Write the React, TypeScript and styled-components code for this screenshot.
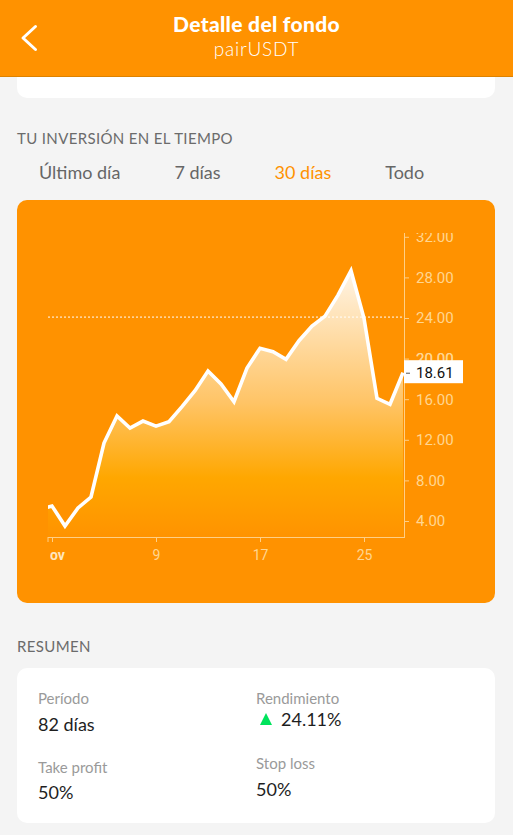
import React from "react";
import styled, { createGlobalStyle } from "styled-components";

const GlobalStyle = createGlobalStyle`
  html, body { margin: 0; padding: 0; background: #f4f4f4; }
  body { font-family: "Lato", "Noto Sans", sans-serif; -webkit-font-smoothing: antialiased; }
  * { box-sizing: border-box; }
`;

const ORANGE = "#ff9200";

const Page = styled.div`
  width: 513px;
  min-height: 835px;
  background: #f4f4f4;
  display: flex;
  flex-direction: column;
`;

const Header = styled.header`
  height: 77px;
  background: ${ORANGE};
  border-bottom: 1px solid #dd8200;
  display: grid;
  grid-template-columns: 60px 1fr 60px;
  align-items: center;
`;

const BackButton = styled.button`
  border: 0;
  background: transparent;
  padding: 0 0 0 20px;
  height: 40px;
  display: flex;
  align-items: center;
  cursor: pointer;
`;

const TitleBlock = styled.div`
  display: flex;
  flex-direction: column;
  align-items: center;
  color: #fff;
  padding-bottom: 4px;
`;

const Title = styled.h1`
  margin: 0;
  font-family: "Lato", sans-serif;
  font-weight: 900;
  font-size: 21px;
  line-height: 26px;
  letter-spacing: 0.3px;
`;

const Subtitle = styled.div`
  font-family: "Lato", sans-serif;
  font-weight: 300;
  font-size: 19px;
  line-height: 24px;
  letter-spacing: 0.8px;
`;

const Content = styled.main`
  display: flex;
  flex-direction: column;
  padding: 0 18px 12px 17px;
`;

const TopCard = styled.div`
  height: 21px;
  background: #fff;
  border-radius: 0 0 10px 10px;
`;

const SectionTitle = styled.h2<{ $top: number }>`
  margin: ${(p) => p.$top}px 0 0;
  font-family: "Lato", sans-serif;
  font-weight: 400;
  font-size: 15px;
  line-height: 18px;
  color: #6b6b6b;
  text-transform: uppercase;
  letter-spacing: 0.35px;
`;

const Tabs = styled.nav`
  display: flex;
  gap: 54px;
  padding-left: 22px;
  margin-top: 14px;
  height: 22px;
`;

const Tab = styled.button<{ $active?: boolean }>`
  border: 0;
  background: transparent;
  padding: 0;
  font-family: "Lato", sans-serif;
  font-size: 18px;
  line-height: 22px;
  color: ${(p) => (p.$active ? ORANGE : "#666666")};
  cursor: pointer;
`;

const ChartCard = styled.section`
  margin-top: 17px;
  height: 403px;
  background: ${ORANGE};
  border-radius: 10px;
  overflow: hidden;
`;

const ChartSvg = styled.svg`
  display: block;
  width: 478px;
  height: 403px;
`;

const SummaryCard = styled.section`
  margin-top: 13px;
  height: 155px;
  background: #fff;
  border-radius: 10px;
  padding: 20px 21px 0;
  display: grid;
  grid-template-columns: 218px 1fr;
`;

const Column = styled.div<{ $gap: number }>`
  display: flex;
  flex-direction: column;
  gap: ${(p) => p.$gap}px;
`;

const Item = styled.div`
  display: flex;
  flex-direction: column;
`;

const Label = styled.div`
  font-size: 15px;
  line-height: 20px;
  color: #9a9a9a;
`;

const Value = styled.div<{ $offset: number }>`
  margin-top: ${(p) => p.$offset}px;
  font-size: 18px;
  line-height: 24px;
  color: #1e1e1e;
  display: flex;
  align-items: center;
  gap: 9px;
`;

const UpTriangle = styled.span`
  width: 0;
  height: 0;
  border-left: 6.5px solid transparent;
  border-right: 6.5px solid transparent;
  border-bottom: 12px solid #00e35c;
  margin-left: 4px;
  margin-top: -1px;
`;

// ---- chart data ----
const values = [
  5.08, 5.48, 3.51, 5.28, 6.36, 11.68, 14.34, 13.15, 13.84, 13.35, 13.78, 15.26,
  16.84, 18.78, 17.5, 15.75, 19.07, 21.01, 20.68, 19.93, 21.76, 23.21, 24.19,
  26.26, 28.66, 23.97, 16.09, 15.5, 18.61,
];

const PLOT = { left: 31, right: 387, top: 33, bottom: 337 };
const xOf = (i: number) => 22 + i * 13; // i=1 -> day 1 at 35
const yOf = (v: number) => 361.6 - 10.15 * v;
const AXIS = "#ffcf85";
const LABEL = "#ffd690";
const CHART_FONT = "Roboto, 'Noto Sans', sans-serif";

function Chart() {
  const pts = values.map((v, i) => [xOf(i), yOf(v)] as const);
  const line = pts.map(([x, y], i) => `${i ? "L" : "M"}${x.toFixed(1)} ${y.toFixed(1)}`).join(" ");
  const last = pts[pts.length - 1];
  const area = `${line} L${last[0]} ${PLOT.bottom} L${pts[0][0]} ${PLOT.bottom} Z`;
  const yTicks = [4, 8, 12, 16, 20, 24, 28, 32];
  const xTicks = [
    { day: 1, label: "Nov", bold: true },
    { day: 9, label: "9" },
    { day: 17, label: "17" },
    { day: 25, label: "25" },
  ];
  const current = values[values.length - 1];
  const cy = yOf(current);
  const refY = yOf(24.09);
  const peekTop = yOf(20) - 12;
  const peekH = Math.max(0, cy - 12.5 - peekTop);

  return (
    <ChartSvg viewBox="0 0 478 403">
      <defs>
        <linearGradient id="areaFill" gradientUnits="userSpaceOnUse" x1="0" y1="68" x2="0" y2="337">
          <stop offset="0" stopColor="#fff5e8" />
          <stop offset="0.5" stopColor="#ffc466" />
          <stop offset="0.78" stopColor="#ffa700" />
          <stop offset="1" stopColor="#ff9300" />
        </linearGradient>
        <clipPath id="plotClip">
          <rect x={PLOT.left} y={PLOT.top - 10} width={PLOT.right - PLOT.left} height={PLOT.bottom - PLOT.top + 10} />
        </clipPath>
        <clipPath id="yLabelClip">
          <rect x={PLOT.right} y={PLOT.top} width={91} height={370} />
        </clipPath>
        <clipPath id="xLabelClip">
          <rect x={PLOT.left + 2} y={PLOT.bottom} width={445} height={66} />
        </clipPath>
        <clipPath id="peekClip">
          <rect x={PLOT.right} y={peekTop} width={91} height={peekH} />
        </clipPath>
      </defs>

      <g clipPath="url(#plotClip)">
        <path d={area} fill="url(#areaFill)" />
        <path d={line} fill="none" stroke="#fff" strokeWidth={3.6} strokeLinejoin="miter" />
      </g>

      <line x1={PLOT.left} x2={PLOT.right} y1={refY} y2={refY} stroke="#fff" strokeWidth={1} strokeDasharray="2 2" />

      {/* axes */}
      <line x1={PLOT.right + 0.5} x2={PLOT.right + 0.5} y1={PLOT.top} y2={PLOT.bottom + 1} stroke={AXIS} strokeWidth={1} />
      <line x1={PLOT.left} x2={PLOT.right + 1} y1={PLOT.bottom + 0.5} y2={PLOT.bottom + 0.5} stroke={AXIS} strokeWidth={1} />

      <g clipPath="url(#yLabelClip)">
        {yTicks.map((t) => (
          <g key={t}>
            <line x1={PLOT.right} x2={PLOT.right + 5} y1={yOf(t) + 0.5} y2={yOf(t) + 0.5} stroke={AXIS} />
            {Math.abs(yOf(t) - cy) > 14 && (
              <text x={399} y={yOf(t)} dy="0.36em" fill={LABEL} fontFamily={CHART_FONT} fontSize={15}>
                {t.toFixed(2)}
              </text>
            )}
          </g>
        ))}
      </g>

      {/* the 20.00 label peeks out above the current value box */}
      <text x={399} y={yOf(20)} dy="0.36em" fill={LABEL} fontFamily={CHART_FONT} fontSize={15} clipPath="url(#peekClip)">
        20.00
      </text>

      <line x1={PLOT.left} x2={PLOT.left} y1={PLOT.bottom} y2={PLOT.bottom + 5} stroke={AXIS} />
      <g clipPath="url(#xLabelClip)">
        {xTicks.map((t) => (
          <g key={t.day}>
            <line x1={xOf(t.day) + 0.5} x2={xOf(t.day) + 0.5} y1={PLOT.bottom} y2={PLOT.bottom + 5} stroke={AXIS} />
            <text
              x={xOf(t.day) + 0.5}
              y={355}
              dy="0.36em"
              textAnchor="middle"
              fill={t.bold ? "#ffe6bf" : LABEL}
              fontWeight={t.bold ? 700 : 400}
              fontFamily={CHART_FONT}
              fontSize={14}
            >
              {t.label}
            </text>
          </g>
        ))}
      </g>

      {/* current value marker */}
      <rect x={PLOT.right} y={cy - 12.5} width={59} height={23} fill="#fff" />
      <line x1={PLOT.right + 2} x2={PLOT.right + 6} y1={cy + 0.5} y2={cy + 0.5} stroke="#555" />
      <text x={399} y={cy} dy="0.36em" fill="#111" fontFamily={CHART_FONT} fontSize={15}>
        {current.toFixed(2)}
      </text>
    </ChartSvg>
  );
}

export default function App() {
  return (
    <>
      <GlobalStyle />
      <Page>
        <Header>
          <BackButton aria-label="Volver">
            <svg width="18" height="28" viewBox="0 0 18 28">
              <path d="M15.5 2.5 L3 14 L15.5 25.5" fill="none" stroke="#fff" strokeWidth="3" strokeLinecap="round" strokeLinejoin="round" />
            </svg>
          </BackButton>
          <TitleBlock>
            <Title>Detalle del fondo</Title>
            <Subtitle>pairUSDT</Subtitle>
          </TitleBlock>
          <div />
        </Header>
        <Content>
          <TopCard />
          <SectionTitle $top={31}>Tu inversión en el tiempo</SectionTitle>
          <Tabs>
            <Tab>Último día</Tab>
            <Tab>7 días</Tab>
            <Tab $active>30 días</Tab>
            <Tab>Todo</Tab>
          </Tabs>
          <ChartCard>
            <Chart />
          </ChartCard>
          <SectionTitle $top={34}>Resumen</SectionTitle>
          <SummaryCard>
            <Column $gap={21}>
              <Item>
                <Label>Período</Label>
                <Value $offset={4}>82 días</Value>
              </Item>
              <Item>
                <Label>Take profit</Label>
                <Value $offset={3}>50%</Value>
              </Item>
            </Column>
            <Column $gap={22}>
              <Item>
                <Label>Rendimiento</Label>
                <Value $offset={-1}>
                  <UpTriangle />
                  24.11%
                </Value>
              </Item>
              <Item>
                <Label>Stop loss</Label>
                <Value $offset={4}>50%</Value>
              </Item>
            </Column>
          </SummaryCard>
        </Content>
      </Page>
    </>
  );
}
